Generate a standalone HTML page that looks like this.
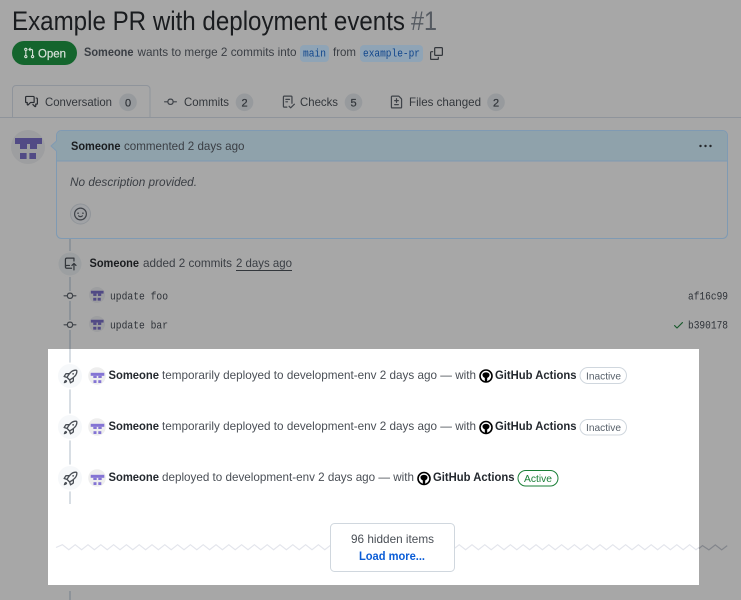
<!DOCTYPE html>
<html lang="en">
<head>
<meta charset="utf-8">
<title>Example PR with deployment events #1</title>
<style>
html,body{margin:0;padding:0;background:#a7a7a7;width:741px;height:600px;overflow:hidden}
svg{display:block}
text{font-family:"Liberation Sans",sans-serif;font-size:12px;fill:#3f4349}
.b{font-weight:700;fill:#24292f}
.gb{font-weight:700;fill:#1a1c1f}
.g{fill:#3a3e44}
.m{font-family:"Liberation Mono",monospace;font-size:11px;fill:#2e3238}
.w{fill:#4a4f56}
.tab{fill:#33373c}
.c{font-size:11px;fill:#33373c;stroke:#33373c;stroke-width:.25;text-anchor:middle}
</style>
</head>
<body>
<svg width="741" height="600" viewBox="0 0 741 600" xmlns="http://www.w3.org/2000/svg">
<defs>
<path id="commit" d="M11.93 8.5a4.002 4.002 0 0 1-7.86 0H.75a.75.75 0 0 1 0-1.5h3.32a4.002 4.002 0 0 1 7.86 0h3.32a.75.75 0 0 1 0 1.5Zm-1.43-.75a2.5 2.5 0 1 0-5 0 2.5 2.5 0 0 0 5 0Z"/>
<path id="rocket" d="M14.064 0h.186C15.216 0 16 .784 16 1.75v.186a8.752 8.752 0 0 1-2.564 6.186l-.458.459c-.314.314-.641.616-.979.904v3.207c0 .608-.315 1.172-.833 1.49l-2.774 1.707a.749.749 0 0 1-1.11-.418l-.954-3.102a1.214 1.214 0 0 1-.145-.125L3.754 9.816a1.218 1.218 0 0 1-.124-.145L.528 8.717a.749.749 0 0 1-.418-1.11l1.71-2.774A1.748 1.748 0 0 1 3.31 4h3.204c.288-.338.59-.665.904-.979l.459-.458A8.749 8.749 0 0 1 14.064 0ZM8.938 3.623h-.002l-.458.458c-.76.76-1.437 1.598-2.02 2.5l-1.5 2.317 2.143 2.143 2.317-1.5c.902-.583 1.74-1.26 2.499-2.02l.459-.458a7.25 7.25 0 0 0 2.123-5.127V1.75a.25.25 0 0 0-.25-.25h-.186a7.249 7.249 0 0 0-5.125 2.123ZM3.56 14.56c-.732.732-2.334 1.045-3.005 1.148a.234.234 0 0 1-.201-.064.234.234 0 0 1-.064-.201c.103-.671.416-2.273 1.15-3.003a1.502 1.502 0 1 1 2.12 2.12Zm6.94-3.935c-.088.06-.177.118-.266.175l-2.35 1.521.548 1.783 1.949-1.2a.25.25 0 0 0 .119-.213ZM3.678 8.116 5.2 5.766c.058-.09.117-.178.176-.266H3.309a.25.25 0 0 0-.213.119l-1.2 1.95ZM12 5a1 1 0 1 1-2 0 1 1 0 0 1 2 0Z"/>
<g id="avdark">
<circle cx="8.5" cy="8.5" r="8.5" fill="#9d9ea0"/>
<rect x="2" y="4" width="13.5" height="3" fill="#514a85"/>
<rect x="4.5" y="7" width="3.5" height="2.5" fill="#514a85"/>
<rect x="9.5" y="7" width="3.5" height="2.5" fill="#514a85"/>
<rect x="4.5" y="11.500" width="3.300" height="3" fill="#514a85"/>
<rect x="9.200" y="11.500" width="3.300" height="3" fill="#514a85"/>
</g>
<g id="avlight">
<circle cx="9" cy="9" r="8.8" fill="#eeeeee"/>
<rect x="2.700" y="5.800" width="13.600" height="3" fill="#8474d4"/>
<rect x="5.300" y="8.800" width="3.400" height="2.200" fill="#8474d4"/>
<rect x="10.300" y="8.800" width="3.400" height="2.200" fill="#8474d4"/>
<rect x="5.500" y="13.200" width="3" height="2.800" fill="#8474d4"/>
<rect x="10.300" y="13.200" width="3" height="2.800" fill="#8474d4"/>
</g>
<g id="action">
<circle cx="7" cy="7.5" r="6.800" fill="#000"/>
<circle cx="7" cy="7.5" r="5.200" fill="#fff"/>
<path d="M3.500 6.300C3.500 4.700 5.200 3.900 7 3.900s3.500.8 3.500 2.400c0 1.800-1.400 2.900-2.300 3.100V13.200H5.800V9.400C4.900 9.200 3.500 8.100 3.500 6.300Z" fill="#000"/>
</g>
</defs>

<!-- header -->
<text x="12" y="30" style="font-size:27px;fill:#1a1c1f" textLength="393" lengthAdjust="spacingAndGlyphs">Example PR with deployment events</text>
<text x="411" y="30" style="font-size:27px;fill:#555a61" textLength="26" lengthAdjust="spacingAndGlyphs">#1</text>

<rect x="12" y="41" width="65" height="24" rx="12" fill="#14652d"/>
<svg x="23" y="47" width="12" height="12" viewBox="0 0 16 16"><path fill="#d5dfd7" d="M1.500 3.250a2.250 2.250 0 1 1 3 2.122v5.256a2.251 2.251 0 1 1-1.500 0V5.372A2.250 2.250 0 0 1 1.500 3.250Zm5.677-.177L9.573.677A.25.25 0 0 1 10 .854V2.500h1A2.500 2.500 0 0 1 13.500 5v5.628a2.251 2.251 0 1 1-1.500 0V5a1 1 0 0 0-1-1h-1v1.646a.25.25 0 0 1-.427.177L7.177 3.427a.25.25 0 0 1 0-.354ZM3.750 2.500a.75.75 0 1 0 0 1.500.75.75 0 0 0 0-1.500Zm0 9.500a.75.75 0 1 0 0 1.500.75.75 0 0 0 0-1.500Zm8.250.75a.75.75 0 1 0 1.500 0 .75.75 0 0 0-1.500 0Z"/></svg>
<text x="38" y="57.500" style="fill:#d5dfd7;stroke:#d5dfd7;stroke-width:.25" textLength="28" lengthAdjust="spacingAndGlyphs">Open</text>

<text x="84" y="56" class="b" style="fill:#3a3e44" textLength="49.500" lengthAdjust="spacingAndGlyphs">Someone</text>
<text x="137.500" y="56" class="g" textLength="159" lengthAdjust="spacingAndGlyphs">wants to merge 2 commits into</text>
<rect x="300" y="45" width="29" height="17" rx="4" fill="#8fa4b6"/>
<text x="303" y="56.500" class="m" style="fill:#0f458c" textLength="23" lengthAdjust="spacingAndGlyphs">main</text>
<text x="333" y="56" class="g" textLength="23" lengthAdjust="spacingAndGlyphs">from</text>
<rect x="360" y="45" width="63" height="17" rx="4" fill="#8fa4b6"/>
<text x="363" y="56.500" class="m" style="fill:#0f458c" textLength="57" lengthAdjust="spacingAndGlyphs">example-pr</text>
<svg x="430" y="47" width="13" height="13" viewBox="0 0 16 16"><path fill="#33373c" d="M0 6.750C0 5.784.784 5 1.750 5h1.500a.75.75 0 0 1 0 1.500h-1.500a.25.25 0 0 0-.25.25v7.500c0 .138.112.25.25.25h7.500a.25.25 0 0 0 .25-.25v-1.500a.75.75 0 0 1 1.500 0v1.500A1.750 1.750 0 0 1 9.250 16h-7.500A1.750 1.750 0 0 1 0 14.250Z"/><path fill="#33373c" d="M5 1.750C5 .784 5.784 0 6.750 0h7.500C15.216 0 16 .784 16 1.750v7.500A1.750 1.750 0 0 1 14.250 11h-7.500A1.750 1.750 0 0 1 5 9.250Zm1.750-.25a.25.25 0 0 0-.25.25v7.500c0 .138.112.25.25.25h7.500a.25.25 0 0 0 .25-.25v-7.500a.25.25 0 0 0-.25-.25Z"/></svg>

<!-- tabs -->
<path d="M12.500 118V89a3.500 3.500 0 0 1 3.500-3.500h130.500a3.500 3.500 0 0 1 3.500 3.500v29" fill="#a7a7a7" stroke="#8f949b"/>
<rect x="0" y="117" width="741" height="1" fill="#8f949b"/>
<svg x="25" y="95" width="13" height="13" viewBox="0 0 16 16"><path fill="#2b2e33" d="M1.750 1h8.500c.966 0 1.750.784 1.750 1.750v5.500A1.750 1.750 0 0 1 10.250 10H7.061l-2.574 2.573A1.458 1.458 0 0 1 2 11.543V10h-.25A1.750 1.750 0 0 1 0 8.250v-5.500C0 1.784.784 1 1.750 1ZM1.500 2.750v5.500c0 .138.112.25.25.25h1a.75.75 0 0 1 .75.75v2.190l2.720-2.720a.749.749 0 0 1 .53-.22h3.500a.25.25 0 0 0 .25-.25v-5.500a.25.25 0 0 0-.25-.25h-8.500a.25.25 0 0 0-.25.25Zm13 2a.25.25 0 0 0-.25-.25h-.5a.75.75 0 0 1 0-1.500h.5c.966 0 1.750.784 1.750 1.750v5.500A1.750 1.750 0 0 1 14.250 12H14v1.543a1.458 1.458 0 0 1-2.487 1.030L9.220 12.280a.749.749 0 0 1 .326-1.275.749.749 0 0 1 .734.215l2.220 2.220v-2.190a.75.75 0 0 1 .75-.75h1a.25.25 0 0 0 .25-.25Z"/></svg>
<text x="45" y="106" class="tab" textLength="67" lengthAdjust="spacingAndGlyphs">Conversation</text>
<circle cx="128" cy="102.300" r="8.800" fill="#979a9d"/><text x="128" y="106.300" class="c">0</text>

<svg x="164" y="95.500" width="13" height="13" viewBox="0 0 16 16"><use href="#commit" fill="#3f4349"/></svg>
<text x="184" y="106" class="tab" textLength="45" lengthAdjust="spacingAndGlyphs">Commits</text>
<circle cx="244.500" cy="102.300" r="8.800" fill="#979a9d"/><text x="244.500" y="106.300" class="c">2</text>

<svg x="282" y="95.500" width="13" height="13" viewBox="0 0 16 16"><path fill="#3f4349" d="M2.500 1.750v11.500c0 .138.112.25.25.25h3.170a.75.75 0 0 1 0 1.500H2.750A1.750 1.750 0 0 1 1 13.250V1.750C1 .784 1.784 0 2.750 0h8.500C12.216 0 13 .784 13 1.750v7.736a.75.75 0 0 1-1.500 0V1.750a.25.25 0 0 0-.25-.25h-8.500a.25.25 0 0 0-.25.25Zm13.274 9.537v-.001l-4.557 4.450a.75.75 0 0 1-1.055-.008l-1.943-1.950a.75.75 0 0 1 1.062-1.058l1.419 1.425 4.026-3.932a.75.75 0 1 1 1.048 1.074ZM4.750 4h4.500a.75.75 0 0 1 0 1.500h-4.500a.75.75 0 0 1 0-1.500ZM4 7.750A.75.75 0 0 1 4.750 7h2a.75.75 0 0 1 0 1.500h-2A.75.75 0 0 1 4 7.750Z"/></svg>
<text x="300" y="106" class="tab" textLength="38" lengthAdjust="spacingAndGlyphs">Checks</text>
<circle cx="353.500" cy="102.300" r="8.800" fill="#979a9d"/><text x="353.500" y="106.300" class="c">5</text>

<svg x="390" y="95.500" width="13" height="13" viewBox="0 0 16 16"><path fill="#3f4349" d="M1 1.750C1 .784 1.784 0 2.750 0h7.586c.464 0 .909.184 1.237.513l2.914 2.914c.329.328.513.773.513 1.237v9.586A1.750 1.750 0 0 1 13.250 16H2.750A1.750 1.750 0 0 1 1 14.250Zm1.750-.25a.25.25 0 0 0-.25.25v12.500c0 .138.112.25.25.25h10.500a.25.25 0 0 0 .25-.25V4.664a.25.25 0 0 0-.073-.177l-2.914-2.914a.25.25 0 0 0-.177-.073ZM8 3.250a.75.75 0 0 1 .75.75v1.500h1.500a.75.75 0 0 1 0 1.500h-1.500v1.500a.75.75 0 0 1-1.500 0V7h-1.500a.75.75 0 0 1 0-1.500h1.500V4A.75.75 0 0 1 8 3.250Zm-3 8a.75.75 0 0 1 .75-.75h4.500a.75.75 0 0 1 0 1.500h-4.500a.75.75 0 0 1-.75-.75Z"/></svg>
<text x="409" y="106" class="tab" textLength="72" lengthAdjust="spacingAndGlyphs">Files changed</text>
<circle cx="496" cy="102.300" r="8.800" fill="#979a9d"/><text x="496" y="106.300" class="c">2</text>

<!-- big avatar -->
<svg x="11" y="130" width="34" height="34" viewBox="0 0 17 17"><use href="#avdark"/></svg>

<!-- timeline gray -->
<rect x="69" y="238" width="2" height="111" fill="#8d9399"/>
<rect x="69" y="591" width="2" height="9" fill="#8d9399"/>

<!-- comment box -->
<rect x="56.500" y="130.500" width="671" height="108" rx="5" fill="#a7a7a7" stroke="#7f9ab3"/>
<path d="M57 161V135.500a4.500 4.500 0 0 1 4.500-4.500h661a4.500 4.500 0 0 1 4.500 4.500V161Z" fill="#8fa2ab"/>
<rect x="57" y="160.500" width="670" height="1" fill="#7f9ab3"/>
<path d="M56.500 141 51 146l5.500 5Z" fill="#8fa2ab" stroke="#7f9ab3" stroke-width="1"/>
<rect x="56" y="141.500" width="1.500" height="9" fill="#8fa2ab"/>
<text x="71" y="150" class="gb" textLength="49.500" lengthAdjust="spacingAndGlyphs">Someone</text>
<text x="124" y="150" class="g" textLength="120.500" lengthAdjust="spacingAndGlyphs">commented 2 days ago</text>
<circle cx="700.500" cy="146" r="1.200" fill="#25282c"/><circle cx="705.500" cy="146" r="1.200" fill="#25282c"/><circle cx="710.500" cy="146" r="1.200" fill="#25282c"/>
<text x="70" y="186" class="g" style="font-style:italic" textLength="127" lengthAdjust="spacingAndGlyphs">No description provided.</text>
<circle cx="80.500" cy="214" r="10" fill="#a0a2a5" stroke="#91959a"/>
<svg x="74" y="207.500" width="13" height="13" viewBox="0 0 16 16"><path fill="#3f4349" d="M8 0a8 8 0 1 1 0 16A8 8 0 0 1 8 0ZM1.500 8a6.500 6.500 0 1 0 13 0 6.500 6.500 0 0 0-13 0Zm3.820 1.636a.75.75 0 0 1 1.038.175l.007.009c.103.118.22.222.35.31.264.178.683.37 1.285.37.602 0 1.020-.192 1.285-.371.13-.088.247-.192.35-.31l.007-.008a.75.75 0 0 1 1.222.87c-.16.25-.4.47-.73.680-.63.418-1.370.638-2.127.629-.946 0-1.652-.308-2.126-.63a3.331 3.331 0 0 1-.715-.657.75.75 0 0 1 .154-1.067ZM12 7a1 1 0 1 1-2 0 1 1 0 0 1 2 0ZM5 8a1 1 0 1 1 0-2 1 1 0 0 1 0 2Z"/></svg>

<!-- commits group -->
<circle cx="70" cy="264" r="13" fill="#a7a7a7"/>
<circle cx="70" cy="264" r="11.500" fill="#9c9fa1"/>
<svg x="64" y="257.500" width="13" height="13" viewBox="0 0 16 16"><path fill="#33373c" d="M1 2.500A2.500 2.500 0 0 1 3.500 0h8.750a.75.75 0 0 1 .75.75v3.500a.75.75 0 0 1-1.500 0V1.500h-8a1 1 0 0 0-1 1v6.708A2.493 2.493 0 0 1 3.500 9h3.250a.75.75 0 0 1 0 1.500H3.500a1 1 0 0 0 0 2h5.750a.75.75 0 0 1 0 1.500H3.500A2.500 2.500 0 0 1 1 11.500Zm13.230 7.790h-.001l-1.224-1.224v6.184a.75.75 0 0 1-1.500 0V9.066L10.280 10.290a.75.75 0 0 1-1.060-1.061l2.505-2.504a.75.75 0 0 1 1.060 0L15.290 9.230a.751.751 0 0 1-.018 1.042.751.751 0 0 1-1.042.018Z"/></svg>
<text x="89.500" y="267" class="gb" textLength="49.500" lengthAdjust="spacingAndGlyphs">Someone</text>
<text x="143" y="267" class="g" textLength="89" lengthAdjust="spacingAndGlyphs">added 2 commits</text>
<text x="236" y="267" class="g" textLength="56" lengthAdjust="spacingAndGlyphs">2 days ago</text>
<rect x="236" y="270" width="56" height="1" fill="#33373c"/>

<rect x="64" y="291" width="13" height="10" fill="#a7a7a7"/>
<svg x="63.500" y="289.500" width="13" height="13" viewBox="0 0 16 16"><use href="#commit" fill="#3f4349"/></svg>
<svg x="89" y="287" width="16" height="16" viewBox="0 0 17 17"><use href="#avdark"/></svg>
<text x="110" y="299.500" class="m" textLength="58" lengthAdjust="spacingAndGlyphs">update foo</text>
<text x="688" y="299.500" class="m" textLength="40" lengthAdjust="spacingAndGlyphs">af16c99</text>

<rect x="64" y="320" width="13" height="10" fill="#a7a7a7"/>
<svg x="63.500" y="318.500" width="13" height="13" viewBox="0 0 16 16"><use href="#commit" fill="#3f4349"/></svg>
<svg x="89" y="316" width="16" height="16" viewBox="0 0 17 17"><use href="#avdark"/></svg>
<text x="110" y="328.500" class="m" textLength="58" lengthAdjust="spacingAndGlyphs">update bar</text>
<svg x="672.500" y="319" width="12" height="12" viewBox="0 0 16 16"><path fill="#1a5a2d" d="M13.780 4.220a.75.75 0 0 1 0 1.060l-7.250 7.250a.75.75 0 0 1-1.060 0L2.220 9.280a.751.751 0 0 1 .018-1.042.751.751 0 0 1 1.042-.018L6 10.940l6.720-6.720a.75.75 0 0 1 1.060 0Z"/></svg>
<text x="688" y="328.500" class="m" textLength="40" lengthAdjust="spacingAndGlyphs">b390178</text>

<!-- white panel -->
<rect x="48" y="349" width="651" height="236" fill="#fff"/>
<rect x="69" y="349" width="2" height="155" fill="#d8dee4"/>

<!-- row 1 -->
<circle cx="70" cy="376" r="13.500" fill="#fff"/>
<circle cx="70" cy="376" r="12" fill="#f6f8fa"/>
<svg x="63.500" y="369.500" width="14" height="14" viewBox="0 0 16 16"><use href="#rocket" fill="#4a4f56"/></svg>
<svg x="88" y="367" width="18" height="18" viewBox="0 0 18 18"><use href="#avlight"/></svg>
<text x="108.500" y="379" class="b" textLength="50.500" lengthAdjust="spacingAndGlyphs">Someone</text>
<text x="162" y="379" class="w" textLength="314" lengthAdjust="spacingAndGlyphs">temporarily deployed to development-env 2 days ago — with</text>
<use href="#action" x="479" y="368.500"/>
<text x="495" y="379" class="b" textLength="81.500" lengthAdjust="spacingAndGlyphs">GitHub Actions</text>
<rect x="580" y="367.500" width="46.500" height="16" rx="8" fill="#fff" stroke="#d0d7de"/>
<text x="586" y="379.500" style="font-size:10.500px;fill:#57606a" textLength="35" lengthAdjust="spacingAndGlyphs">Inactive</text>

<!-- row 2 -->
<circle cx="70" cy="427" r="13.500" fill="#fff"/>
<circle cx="70" cy="427" r="12" fill="#f6f8fa"/>
<svg x="63.500" y="420.500" width="14" height="14" viewBox="0 0 16 16"><use href="#rocket" fill="#4a4f56"/></svg>
<svg x="88" y="418" width="18" height="18" viewBox="0 0 18 18"><use href="#avlight"/></svg>
<text x="108.500" y="430" class="b" textLength="50.500" lengthAdjust="spacingAndGlyphs">Someone</text>
<text x="162" y="430" class="w" textLength="314" lengthAdjust="spacingAndGlyphs">temporarily deployed to development-env 2 days ago — with</text>
<use href="#action" x="479" y="420"/>
<text x="495" y="430" class="b" textLength="81.500" lengthAdjust="spacingAndGlyphs">GitHub Actions</text>
<rect x="580" y="419.500" width="46.500" height="15.500" rx="7.750" fill="#fff" stroke="#d0d7de"/>
<text x="586" y="431" style="font-size:10.500px;fill:#57606a" textLength="35" lengthAdjust="spacingAndGlyphs">Inactive</text>

<!-- row 3 -->
<circle cx="70" cy="478" r="13.500" fill="#fff"/>
<circle cx="70" cy="478" r="12" fill="#f6f8fa"/>
<svg x="63.500" y="471.500" width="14" height="14" viewBox="0 0 16 16"><use href="#rocket" fill="#4a4f56"/></svg>
<svg x="88" y="469" width="18" height="18" viewBox="0 0 18 18"><use href="#avlight"/></svg>
<text x="108.500" y="481" class="b" textLength="50.500" lengthAdjust="spacingAndGlyphs">Someone</text>
<text x="162" y="481" class="w" textLength="252" lengthAdjust="spacingAndGlyphs">deployed to development-env 2 days ago — with</text>
<use href="#action" x="417" y="471"/>
<text x="433" y="481" class="b" textLength="81.500" lengthAdjust="spacingAndGlyphs">GitHub Actions</text>
<rect x="518" y="470.500" width="40" height="15.500" rx="7.750" fill="#fff" stroke="#1a7f37"/>
<text x="524" y="482" style="font-size:10.500px;fill:#1a7f37" textLength="28" lengthAdjust="spacingAndGlyphs">Active</text>

<!-- wavy divider -->
<path fill="none" stroke="#e3e5ec" stroke-width="1.200" d="M56 547.500l6.400-2.800 6.400 5 6.400-5 6.400 5 6.400-5 6.400 5 6.400-5 6.400 5 6.400-5 6.400 5 6.400-5 6.400 5 6.400-5 6.400 5 6.400-5 6.400 5 6.400-5 6.400 5 6.400-5 6.400 5 6.400-5 6.400 5 6.400-5 6.400 5 6.400-5 6.400 5 6.400-5 6.400 5 6.400-5 6.400 5 6.400-5 6.400 5 6.400-5 6.400 5 6.400-5 6.400 5 6.400-5 6.400 5 6.400-5 6.400 5 6.400-5 6.400 5 6.400-5 6.400 5 6.400-5 6.400 5 6.400-5 6.400 5 6.400-5 6.400 5 6.400-5 6.400 5 6.400-5 6.400 5 6.400-5 6.400 5 6.400-5 6.400 5 6.400-5 6.400 5 6.400-5 6.400 5 6.400-5 6.400 5 6.400-5 6.400 5 6.400-5 6.400 5 6.400-5 6.400 5 6.400-5 6.400 5 6.400-5 6.400 5 6.400-5 6.400 5 6.400-5 6.400 5 6.400-5 6.400 5 6.400-5 6.400 5 6.400-5 6.400 5 6.400-5 6.400 5 6.400-5 6.400 5 6.400-5 6.400 5 6.400-5 6.400 5 6.400-5 6.400 5 6.400-5 6.400 5 6.400-5 6.400 5 6.400-5 6.400 5 6.400-5 6.400 5 6.400-5 6.400 5 6.400-5 6.400 5 6.400-5 6.400 5 6.400-5 6.400 5"/>
<rect x="699" y="540" width="42" height="15" fill="#a7a7a7"/>
<path fill="none" stroke="#83868c" stroke-width="1.200" d="M699 548.500l3.500-2.900 6.400 4.300 6.400-5 6.400 5 5.500-4.300"/>

<!-- load more -->
<rect x="330.500" y="523.500" width="124" height="48" rx="4" fill="#fff" stroke="#d0d7de"/>
<text x="351" y="543" class="w" textLength="83" lengthAdjust="spacingAndGlyphs">96 hidden items</text>
<text x="359" y="560" style="font-weight:700;fill:#0a5cd6" textLength="66" lengthAdjust="spacingAndGlyphs">Load more...</text>
</svg>
</body>
</html>
